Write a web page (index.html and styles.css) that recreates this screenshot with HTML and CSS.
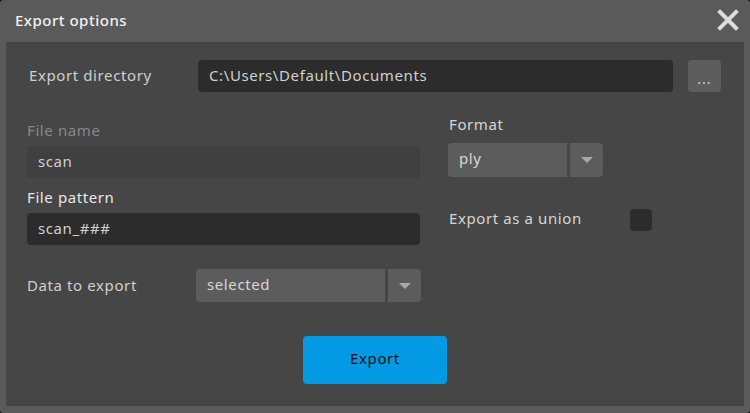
FILE: index.html
```html
<!DOCTYPE html>
<html lang="en">
<head>
    <meta charset="UTF-8">
    <title>Export options</title>
    <link rel="stylesheet" href="styles.css">
</head>
<body>
    <div class="window">
        <div class="titlebar">
            <span class="title">Export options</span>
            <button class="close-btn" aria-label="Close">
                <svg width="22" height="22" viewBox="0 0 22 22">
                    <path d="M3 3 L19 19 M19 3 L3 19" stroke="#dcdcdc" stroke-width="4" stroke-linecap="square"/>
                </svg>
            </button>
        </div>

        <div class="panel">
            <div class="dir-row">
                <label class="dir-label">Export directory</label>
                <input class="text-input dark dir-input" type="text" value="C:\Users\Default\Documents">
                <button class="browse-btn">...</button>
            </div>

            <div class="columns">
                <div class="col-left">
                    <label class="field-label disabled">File name</label>
                    <input class="text-input muted" type="text" value="scan" disabled>
                    <label class="field-label bright pattern-label">File pattern</label>
                    <input class="text-input dark" type="text" value="scan_###">
                </div>
                <div class="col-right">
                    <label class="field-label">Format</label>
                    <div class="combo format-combo">
                        <span class="combo-value">ply</span>
                        <span class="combo-arrow"></span>
                    </div>
                    <div class="union-row">
                        <span class="union-text">Export as a union</span>
                        <span class="checkbox"></span>
                    </div>
                </div>
            </div>

            <div class="data-row">
                <label class="data-label">Data to export</label>
                <div class="combo data-combo">
                    <span class="combo-value">selected</span>
                    <span class="combo-arrow"></span>
                </div>
            </div>

            <div class="footer">
                <button class="export-btn">Export</button>
            </div>
        </div>
    </div>
</body>
</html>
```

FILE: styles.css
```css
* {
    margin: 0;
    padding: 0;
    box-sizing: border-box;
    font-family: "Noto Sans", "DejaVu Sans", sans-serif;
    letter-spacing: 0.6px;
}

body {
    background: #000;
    width: 750px;
    height: 413px;
    overflow: hidden;
}

.window {
    width: 750px;
    height: 413px;
    background: #5a5a5a;
    border-radius: 3px;
    display: flex;
    flex-direction: column;
}

.titlebar {
    height: 42px;
    display: flex;
    align-items: center;
    justify-content: space-between;
    padding: 0 11px 2px 15px;
}

.title {
    color: #f2f2f2;
    font-size: 15px;
    font-weight: 500;
    letter-spacing: 0.5px;
}

.close-btn {
    background: none;
    border: none;
    width: 22px;
    height: 22px;
    display: flex;
}

.panel {
    margin: 0 6px 7px;
    flex: 1;
    background: #464646;
    padding: 18px 21px 0;
    color: #cfcfcf;
    font-size: 15px;
}

.dir-row {
    display: flex;
    align-items: center;
    height: 32px;
}

.dir-label {
    width: 171px;
    padding-left: 2px;
    padding-bottom: 2px;
}

.text-input {
    height: 32px;
    border: none;
    border-radius: 4px;
    padding: 0 11px 2px;
    font-size: 15px;
    color: #d0d0d0;
    outline: none;
    width: 100%;
}

.text-input.dark {
    background: #2c2c2c;
}

.text-input.muted {
    background: #404040;
    border-radius: 0;
}

.dir-input {
    width: 475px;
}

.browse-btn {
    margin-left: 15px;
    width: 33px;
    height: 32px;
    border: none;
    border-radius: 4px;
    background: #5d5d5d;
    color: #d0d0d0;
    font-size: 14px;
    padding-top: 4px;
    letter-spacing: 1px;
}

.columns {
    display: flex;
    gap: 28px;
    align-items: flex-start;
}

.col-left {
    width: 393px;
    display: flex;
    flex-direction: column;
    margin-top: 28px;
}

.col-right {
    width: 204px;
    display: flex;
    flex-direction: column;
    margin-top: 22px;
}

.field-label {
    line-height: 20px;
    height: 20px;
    margin-bottom: 6px;
    color: #d6d6d6;
}

.field-label.disabled {
    color: #888;
}

.field-label.bright {
    color: #e8e8e8;
}

.pattern-label {
    margin-top: 9px;
}

.col-right .field-label {
    margin-bottom: 9px;
    padding-left: 1px;
}

.combo {
    display: flex;
    height: 34px;
    border-radius: 4px;
    overflow: hidden;
    gap: 3px;
}

.combo-value {
    flex: 1;
    background: #5c5c5c;
    color: #d6d6d6;
    padding-left: 11px;
    line-height: 30px;
}

.combo-arrow {
    width: 33px;
    background: #5c5c5c;
    display: flex;
    align-items: center;
    justify-content: center;
}

.combo-arrow::after {
    content: "";
    border-left: 6px solid transparent;
    border-right: 6px solid transparent;
    border-top: 6px solid #a8a8a8;
}

.format-combo {
    width: 155px;
}

.union-row {
    margin-top: 32px;
    height: 22px;
    display: flex;
    align-items: center;
    justify-content: space-between;
    padding-left: 1px;
    color: #d6d6d6;
}

.union-text {
    padding-bottom: 4px;
}

.checkbox {
    width: 22px;
    height: 22px;
    border-radius: 4px;
    background: #2c2c2c;
}

.data-row {
    display: flex;
    align-items: center;
    margin-top: 24px;
}

.data-label {
    width: 169px;
    padding-bottom: 1px;
}

.data-combo {
    width: 225px;
    height: 33px;
}

.footer {
    display: flex;
    justify-content: center;
    margin-top: 34px;
}

.export-btn {
    width: 144px;
    height: 48px;
    border: none;
    border-radius: 4px;
    background: #0399e3;
    color: #111;
    font-size: 15px;
    padding-bottom: 5px;
}
```
